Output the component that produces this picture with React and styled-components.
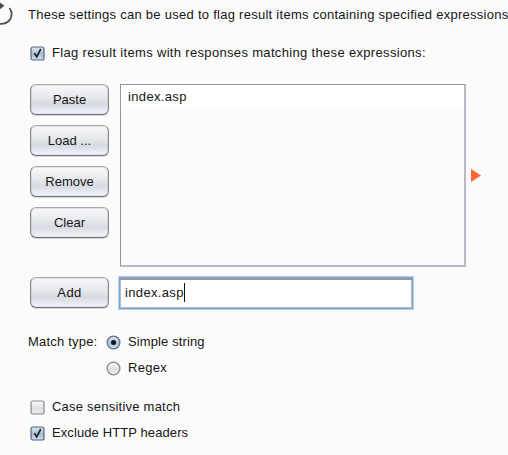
import React from "react";
import styled, { createGlobalStyle } from "styled-components";

const GlobalStyle = createGlobalStyle`
  * { box-sizing: border-box; }
  body { margin: 0; background: #fbfbfb; overflow: hidden; }
`;

const Panel = styled.main`
  width: 508px;
  height: 455px;
  overflow: hidden;
  background: #fbfbfb;
  color: #161616;
  font: 13px/16px "Liberation Sans", Arial, sans-serif;
  white-space: nowrap;
`;

const Header = styled.header`
  display: flex;
  align-items: center;
  height: 30px;
`;

const RefreshIcon = styled.svg`
  flex: none;
  width: 28px;
  height: 30px;
`;

const Text = styled.span`
  letter-spacing: ${(p) => p.$track || 0}px;
`;

const Option = styled.label`
  display: flex;
  align-items: center;
  gap: 7px;
  height: 26px;
`;

const FlagRow = styled(Option)`
  height: 46px;
  padding-left: 30px;
`;

const Glyph = styled.svg`
  flex: none;
  width: 15px;
  height: 15px;
`;

const Editor = styled.section`
  display: grid;
  grid-template-columns: 79px 346px;
  column-gap: 11px;
  padding: 8px 0 0 30px;
`;

const ButtonStack = styled.div`
  display: flex;
  flex-direction: column;
  gap: 10px;
`;

const Button = styled.button`
  width: 79px;
  height: 31px;
  padding: 0;
  border: 1px solid;
  border-color: #a5a8ad #83868b #74777d;
  border-radius: 6px;
  background: linear-gradient(#f7f8f9 0%, #e8eaed 40%, #d7dae1 66%, #f2f4fa 100%);
  box-shadow: inset 0 0 0 1px rgba(160, 164, 174, 0.25), 0 1px 0 rgba(90, 94, 100, 0.25);
  color: inherit;
  font: inherit;
`;

const ListFrame = styled.div`
  display: flex;
  gap: 5px;
`;

const List = styled.div`
  width: 346px;
  height: 183px;
  border: 1px solid #94969e;
  border-right: 2px solid #b9bac4;
  border-bottom: 2px solid #b9bac4;
  flex: none;
`;

const ListItem = styled.div`
  height: 23px;
  padding: 4px 0 0 7px;
  background: #fff;
`;

const Marker = styled.svg`
  flex: none;
  width: 10px;
  height: 13px;
  margin-top: 85px;
`;

const AddRow = styled.div`
  display: flex;
  align-items: center;
  gap: 9px;
  height: 35px;
  margin-top: 8px;
  padding-left: 30px;
`;

const Field = styled.div`
  display: flex;
  align-items: center;
  width: 296px;
  height: 34px;
  padding-left: 5px;
  border: 2px solid #79a8d5;
  outline: 1px solid #b3d0ea;
  outline-offset: -1px;
  background: #fff;
  box-shadow: inset 0 2px 0 #999, inset 0 0 0 1px #b9b9b9;
`;

const Caret = styled.i`
  width: 1px;
  height: 19px;
  background: #111;
`;

const MatchGroup = styled.section`
  display: flex;
  gap: 9px;
  padding: 19px 0 0 28px;
`;

const GroupLabel = styled.div`
  width: 69px;
  height: 26px;
  line-height: 26px;
`;

const Options = styled.div`
  display: flex;
  flex-direction: column;
`;

const Flags = styled(Options)`
  padding: 13px 0 0 30px;
`;

function Check({ on }) {
  return (
    <Glyph viewBox="0 0 15 15">
      <rect x="1" y="1" width="13" height="13" rx="2" fill={on ? "url(#blue)" : "url(#gray)"} stroke={on ? "#53677d" : "#85888d"} strokeWidth="1.2" />
      {on && <path d="M4.4 7.2L6.7 10.8L10.8 3" fill="none" stroke="#20262c" strokeWidth="1.7" />}
    </Glyph>
  );
}

function Radio({ on }) {
  return (
    <Glyph viewBox="0 0 15 15">
      <circle cx="7.5" cy="7.5" r="6.4" fill={on ? "url(#blue)" : "url(#gray)"} stroke={on ? "#5e7083" : "#85888d"} strokeWidth="1.2" />
      {on && <circle cx="7.5" cy="7.5" r="2.5" fill="#11161c" />}
    </Glyph>
  );
}

const Defs = styled.svg`
  display: block;
  width: 0;
  height: 0;
`;

export default function App() {
  return (
    <Panel>
      <GlobalStyle />
      <Defs>
        <linearGradient id="blue" x2="0" y2="1">
          <stop stopColor="#dfe8f2" /><stop offset=".55" stopColor="#a9bdd2" /><stop offset="1" stopColor="#cfe2f4" />
        </linearGradient>
        <linearGradient id="gray" x2="0" y2="1">
          <stop stopColor="#fafafa" /><stop offset=".6" stopColor="#dddfe4" /><stop offset="1" stopColor="#f0f1f6" />
        </linearGradient>
      </Defs>
      <Header>
        <RefreshIcon viewBox="0 0 28 30">
          <path d="M9.4 8A10 9.8 0 0 1 -5 21.5" fill="none" stroke="#505050" strokeWidth="1.8" />
          <path d="M0 2.5L4.5 5.8L0 9.2z" fill="#4b4b4b" />
        </RefreshIcon>
        <Text $track={0.27}>These settings can be used to flag result items containing specified expressions</Text>
      </Header>
      <FlagRow><Check on /><Text $track={0.33}>Flag result items with responses matching these expressions:</Text></FlagRow>
      <Editor>
        <ButtonStack>
          <Button><Text>Paste</Text></Button>
          <Button><Text>Load ...</Text></Button>
          <Button><Text>Remove</Text></Button>
          <Button><Text>Clear</Text></Button>
        </ButtonStack>
        <ListFrame>
          <List><ListItem><Text $track={0.35}>index.asp</Text></ListItem></List>
          <Marker viewBox="0 0 10 13"><path d="M0 0L10 6.5L0 13z" fill="#ff6633" /></Marker>
        </ListFrame>
      </Editor>
      <AddRow>
        <Button><Text $track={0.4}>Add</Text></Button>
        <Field><Text $track={0.35}>index.asp</Text><Caret /></Field>
      </AddRow>
      <MatchGroup>
        <GroupLabel><Text $track={0.2}>Match type:</Text></GroupLabel>
        <Options>
          <Option><Radio on /><Text $track={0.12}>Simple string</Text></Option>
          <Option><Radio /><Text $track={0.3}>Regex</Text></Option>
        </Options>
      </MatchGroup>
      <Flags>
        <Option><Check /><Text $track={0.23}>Case sensitive match</Text></Option>
        <Option><Check on /><Text $track={0.1}>Exclude HTTP headers</Text></Option>
      </Flags>
    </Panel>
  );
}
